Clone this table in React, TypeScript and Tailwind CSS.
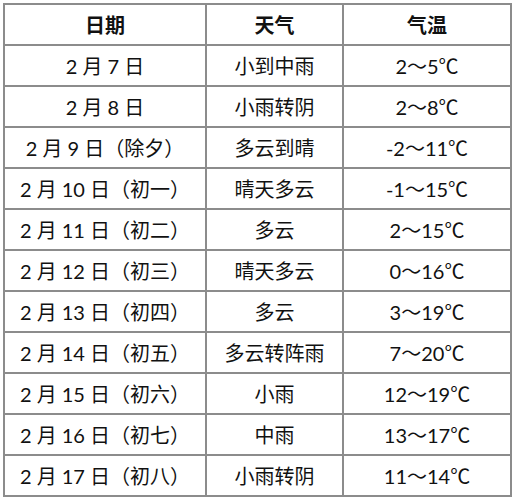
const rows: [string, string, string][] = [
  ['2 月 7 日', '小到中雨', '2～5'],
  ['2 月 8 日', '小雨转阴', '2～8'],
  ['2 月 9 日（除夕）', '多云到晴', '-2～11'],
  ['2 月 10 日（初一）', '晴天多云', '-1～15'],
  ['2 月 11 日（初二）', '多云', '2～15'],
  ['2 月 12 日（初三）', '晴天多云', '0～16'],
  ['2 月 13 日（初四）', '多云', '3～19'],
  ['2 月 14 日（初五）', '多云转阵雨', '7～20'],
  ['2 月 15 日（初六）', '小雨', '12～19'],
  ['2 月 16 日（初七）', '中雨', '13～17'],
  ['2 月 17 日（初八）', '小雨转阴', '11～14'],
]

const cell = 'h-[41px] border-2 border-[#8c8c8c] text-center align-middle p-0'

export default function App() {
  return (
    <div
      className="w-[513px] h-[500px] bg-white pl-[3px] pt-[3px] text-[#111] text-[20px]"
      style={{ fontFamily: 'Lato, "Noto Sans CJK SC", sans-serif' }}
    >
      <table className="w-[507px] border-collapse table-fixed">
        <colgroup>
          <col className="w-[202px]" />
          <col className="w-[137px]" />
          <col className="w-[168px]" />
        </colgroup>
        <thead>
          <tr>
            <th className={cell + ' font-bold'}>日期</th>
            <th className={cell + ' font-bold'}>天气</th>
            <th className={cell + ' font-bold'}>气温</th>
          </tr>
        </thead>
        <tbody>
          {rows.map(([date, weather, temp]) => (
            <tr key={date}>
              <td className={cell + ' whitespace-pre'}>{date}</td>
              <td className={cell}>{weather}</td>
              <td className={cell}>
                {temp}
                <span style={{ fontFamily: '"Noto Sans CJK SC", sans-serif' }}>℃</span>
              </td>
            </tr>
          ))}
        </tbody>
      </table>
    </div>
  )
}
